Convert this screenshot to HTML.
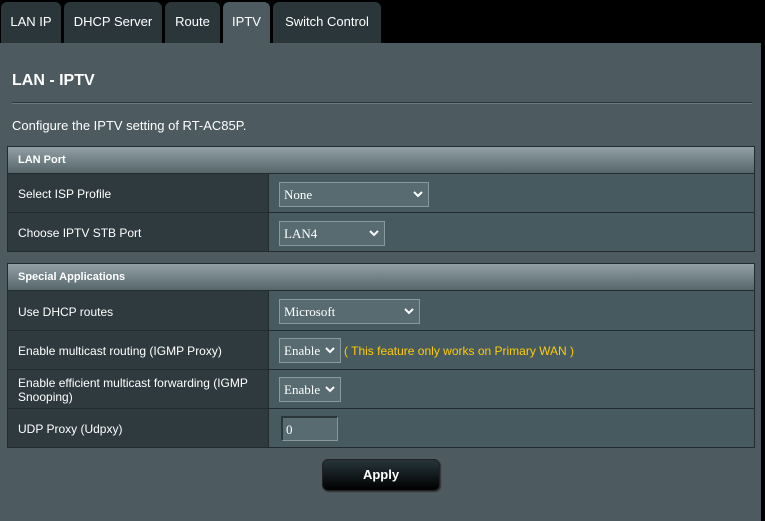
<!DOCTYPE html>
<html><head><meta charset="utf-8"><style>
*{margin:0;padding:0;box-sizing:border-box}
body{width:765px;height:521px;background:#000;position:relative;overflow:hidden;font-family:"Liberation Sans",sans-serif;color:#fff;font-size:12px}
.tab{position:absolute;top:2px;height:41px;background:#2b363a;border-radius:6px 6px 0 0;font-size:13px;line-height:40px;text-align:center;color:#fff}
.tab.on{background:#4d5a5f}
.panel{position:absolute;left:0;top:43px;width:761px;height:478px;background:#4d5a5f}
.t{position:absolute;font-size:12px}
.hdr{position:absolute;left:7px;width:748px;height:28px;background:linear-gradient(#92a0a5,#56666b);border:1px solid #222c30;font-weight:bold;font-size:11px;line-height:26px;padding-left:10px;}
.row{position:absolute;left:7px;width:748px;background:#475a5f;border:1px solid #222c30;border-top:none}
.lab{position:absolute;left:0;top:0;bottom:0;width:261px;background:#2f3a3e;border-right:1px solid #222c30;padding-left:10px;padding-top:2px;display:flex;align-items:center;font-size:12px;line-height:14px}
.sel{position:absolute;height:25px;background:#576b71;border:1px solid #8a999e;font-family:"Liberation Serif",serif;font-size:13px;line-height:23px;padding-left:4px;color:#fff}
.sel svg{position:absolute;right:5px;top:8px}
</style></head><body>
<div class="tab" style="left:1px;width:60px">LAN IP</div>
<div class="tab" style="left:64px;width:98px">DHCP Server</div>
<div class="tab" style="left:165px;width:55px">Route</div>
<div class="tab on" style="left:223px;width:47px">IPTV</div>
<div class="tab" style="left:273px;width:108px">Switch Control</div>
<div class="panel"></div>
<div class="t" style="left:12px;top:72px;font-size:16px;font-weight:bold">LAN - IPTV</div>
<div style="position:absolute;left:12px;top:102px;width:740px;height:1px;background:#2b363a"></div>
<div style="position:absolute;left:12px;top:103px;width:740px;height:1px;background:#6b7a7f"></div>
<div class="t" style="left:12px;top:118px;font-size:13px">Configure the IPTV setting of RT-AC85P.</div>

<div class="hdr" style="top:146px">LAN Port</div>
<div class="row" style="top:174px;height:39px"><div class="lab">Select ISP Profile</div></div>
<div class="row" style="top:213px;height:39px"><div class="lab">Choose IPTV STB Port</div></div>
<div class="sel" style="left:279px;top:182px;width:150px">None<svg width="10" height="7" viewBox="0 0 10 7"><path d="M1 1l4 4 4-4" stroke="#fff" stroke-width="2" fill="none"/></svg></div>
<div class="sel" style="left:279px;top:221px;width:106px">LAN4<svg width="10" height="7" viewBox="0 0 10 7"><path d="M1 1l4 4 4-4" stroke="#fff" stroke-width="2" fill="none"/></svg></div>

<div class="hdr" style="top:263px">Special Applications</div>
<div class="row" style="top:291px;height:40px"><div class="lab">Use DHCP routes</div></div>
<div class="row" style="top:331px;height:39px"><div class="lab">Enable multicast routing (IGMP Proxy)</div></div>
<div class="row" style="top:370px;height:39px"><div class="lab">Enable efficient multicast forwarding (IGMP Snooping)</div></div>
<div class="row" style="top:409px;height:39px"><div class="lab">UDP Proxy (Udpxy)</div></div>
<div class="sel" style="left:279px;top:299px;width:141px">Microsoft<svg width="10" height="7" viewBox="0 0 10 7"><path d="M1 1l4 4 4-4" stroke="#fff" stroke-width="2" fill="none"/></svg></div>
<div class="sel" style="left:279px;top:338px;width:62px">Enable<svg width="10" height="7" viewBox="0 0 10 7"><path d="M1 1l4 4 4-4" stroke="#fff" stroke-width="2" fill="none"/></svg></div>
<div class="t" style="left:344px;top:344px;color:#ffcc00;font-size:12px">( This feature only works on Primary WAN )</div>
<div class="sel" style="left:279px;top:377px;width:62px">Enable<svg width="10" height="7" viewBox="0 0 10 7"><path d="M1 1l4 4 4-4" stroke="#fff" stroke-width="2" fill="none"/></svg></div>
<div class="sel" style="left:281px;top:416px;width:57px;border-color:#2b363a #8a999e #8a999e #2b363a;border-width:2px 1px 1px 2px;padding-left:3px">0</div>

<div style="position:absolute;left:322px;top:459px;width:118px;height:32px;border-radius:6px;background:linear-gradient(#26353a,#000);border:1px solid #222;box-shadow:1px 1px 1px #333;text-align:center;line-height:30px;font-weight:bold;font-size:13px">Apply</div>
</body></html>
